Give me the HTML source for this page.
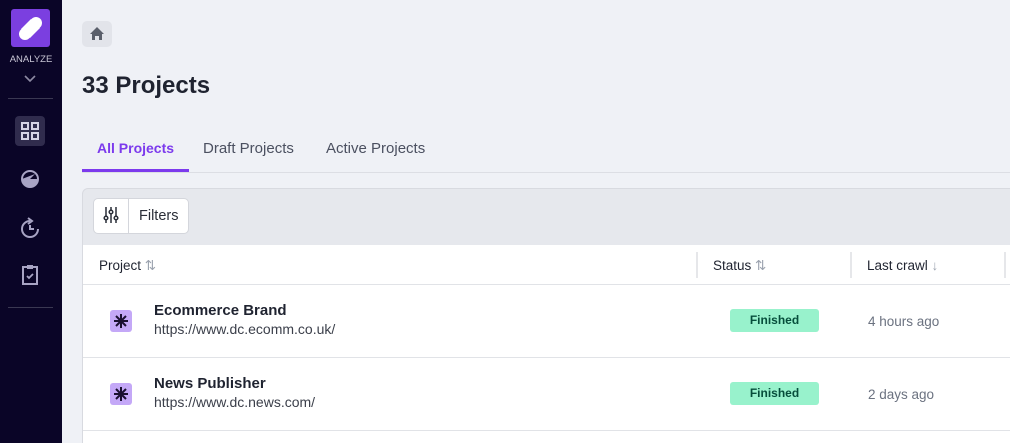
<!DOCTYPE html><html><head><style>
*{box-sizing:border-box;margin:0;padding:0}
html,body{width:1010px;height:443px;overflow:hidden}
body{background:#eff1f6;font-family:"Liberation Sans",sans-serif;position:relative;color:#1f2330}
.sb{position:absolute;left:0;top:0;width:62px;height:443px;background:#0a0527}
.a{position:absolute}
.hr{position:absolute;left:8px;width:45px;height:1px;background:#3a3852}
.th{position:absolute;top:258px;font-size:13.5px;color:#1f2330}
.sep{position:absolute;top:252px;width:2px;height:26px;background:#e6e7ea}
.nm{position:absolute;left:154px;font-size:15px;font-weight:bold;color:#1f2330}
.url{position:absolute;left:154px;font-size:14px;color:#3b3f4a}
.fin{position:absolute;left:730px;width:89px;height:23px;background:#98f2cc;border-radius:3px;color:#064e3b;font-size:12px;font-weight:bold;text-align:center;line-height:23px}
.ago{position:absolute;left:868px;font-size:13.5px;color:#6b7280}
.ic{position:absolute;left:110px;width:22px;height:22px;background:#c4a8f7;border-radius:3px}
.tab{position:absolute;top:140px;font-size:15px;color:#4b5060}
</style></head><body>
<div class="sb">
<div class="a" style="left:11px;top:9px;width:39px;height:38px;background:#7b3fe0;border-radius:3px"><svg width="39" height="38"><g fill="#fff"><circle cx="25" cy="14" r="6"/><circle cx="14" cy="25" r="6"/><path d="M20 10 L29 19 L19 29 L10 20Z"/></g></svg></div>
<div class="a" style="left:0;top:54px;width:62px;text-align:center;color:#c9c7d6;font-size:9.5px">ANALYZE</div>
<svg class="a" style="left:23px;top:74px" width="14" height="9"><path d="M2 2 L7 7 L12 2" stroke="#8d8aa3" stroke-width="1.6" fill="none"/></svg>
<div class="hr" style="top:98px"></div>
<div class="a" style="left:15px;top:116px;width:30px;height:30px;background:#302c4d;border-radius:4px"><svg width="30" height="30"><g fill="none" stroke="#d6d3e6" stroke-width="2"><rect x="7" y="7" width="6" height="6"/><rect x="17" y="7" width="6" height="6"/><rect x="7" y="17" width="6" height="6"/><rect x="17" y="17" width="6" height="6"/></g></svg></div>
<svg class="a" style="left:20px;top:169px" width="20" height="20"><circle cx="10" cy="10" r="8" fill="none" stroke="#a8a4c4" stroke-width="2"/><path d="M2 10 A8 8 0 0 0 18 10 L10 10 L15 5" fill="#a8a4c4"/></svg>
<svg class="a" style="left:20px;top:216px" width="20" height="24"><path d="M10 5 A8 8 0 1 0 18 13" fill="none" stroke="#a8a4c4" stroke-width="2"/><path d="M8 2 L12 5 L8 8" fill="none" stroke="#a8a4c4" stroke-width="2"/><path d="M10 9 V13 H14" fill="none" stroke="#a8a4c4" stroke-width="2"/></svg>
<svg class="a" style="left:20px;top:263px" width="20" height="24"><rect x="3" y="4" width="14" height="17" fill="none" stroke="#a8a4c4" stroke-width="2"/><rect x="7" y="2" width="6" height="4" fill="#a8a4c4"/><path d="M7 13 L9 15 L13 11" fill="none" stroke="#a8a4c4" stroke-width="1.8"/></svg>
<div class="hr" style="top:307px"></div>
</div>
<div class="a" style="left:82px;top:21px;width:30px;height:26px;background:#e2e4ea;border-radius:5px"><svg width="30" height="26"><path d="M8 13 L15 6 L22 13 H20 V19 H17 V15 H13 V19 H10 V13Z" fill="#5a5f6b"/></svg></div>
<div class="a" style="left:82px;top:72px;font-size:24px;font-weight:bold;color:#1f2330">33 Projects</div>
<div class="tab" style="left:97px;color:#7c3aed;font-weight:bold;font-size:14px;top:140px">All Projects</div>
<div class="tab" style="left:203px">Draft Projects</div>
<div class="tab" style="left:326px">Active Projects</div>
<div class="a" style="left:82px;top:172px;width:928px;height:1px;background:#dcdee4"></div>
<div class="a" style="left:82px;top:169px;width:107px;height:3px;background:#7c3aed"></div>
<div class="a" style="left:82px;top:188px;width:940px;height:270px;background:#e6e8ed;border:1px solid #d8dae0;border-radius:6px"></div>
<div class="a" style="left:93px;top:198px;width:96px;height:36px;background:#fff;border:1px solid #d4d6dc;border-radius:5px"></div>
<div class="a" style="left:128px;top:199px;width:1px;height:34px;background:#d4d6dc"></div>
<svg class="a" style="left:103px;top:206px" width="16" height="18"><g stroke="#2a2e38" stroke-width="1.5" fill="#fff"><path d="M3 1V17M8 1V17M13 1V17"/><circle cx="3" cy="12" r="1.8"/><circle cx="8" cy="6" r="1.8"/><circle cx="13" cy="12" r="1.8"/></g></svg>
<div class="a" style="left:139px;top:208px;font-size:14.5px;color:#2a2e38">Filters</div>
<div class="a" style="left:83px;top:245px;width:927px;height:210px;background:#fff"></div>
<div class="th" style="left:99px">Project <span style="color:#9ca3af">⇅</span></div>
<div class="sep" style="left:696px"></div>
<div class="th" style="left:713px">Status <span style="color:#9ca3af">⇅</span></div>
<div class="sep" style="left:850px"></div>
<div class="th" style="left:867px">Last crawl <span style="color:#9ca3af">↓</span></div>
<div class="sep" style="left:1004px"></div>
<div class="a" style="left:83px;top:284px;width:927px;height:1px;background:#e1e3e7"></div>
<div class="a" style="left:83px;top:357px;width:927px;height:1px;background:#e1e3e7"></div>
<div class="a" style="left:83px;top:430px;width:927px;height:1px;background:#e1e3e7"></div>
<div class="ic" style="top:310px"><svg width="22" height="22"><g stroke="#1a1030" stroke-width="2"><path d="M11 4V18M4 11H18M6 6L16 16M16 6L6 16"/></g></svg></div>
<div class="nm" style="top:302px">Ecommerce Brand</div>
<div class="url" style="top:321px">https://www.dc.ecomm.co.uk/</div>
<div class="fin" style="top:309px">Finished</div>
<div class="ago" style="top:314px">4 hours ago</div>
<div class="ic" style="top:383px"><svg width="22" height="22"><g stroke="#1a1030" stroke-width="2"><path d="M11 4V18M4 11H18M6 6L16 16M16 6L6 16"/></g></svg></div>
<div class="nm" style="top:375px">News Publisher</div>
<div class="url" style="top:394px">https://www.dc.news.com/</div>
<div class="fin" style="top:382px">Finished</div>
<div class="ago" style="top:387px">2 days ago</div>
</body></html>
